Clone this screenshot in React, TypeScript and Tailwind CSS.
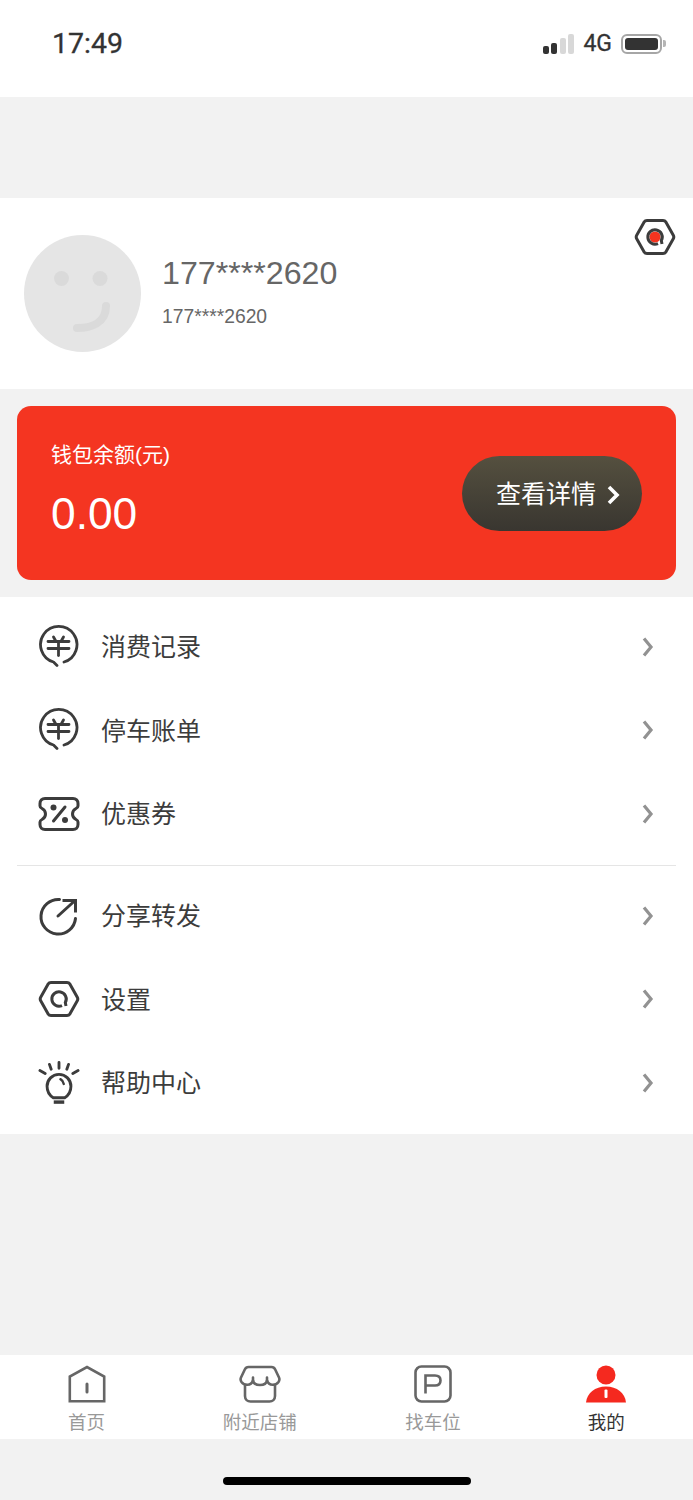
const cjk = "font-['Liberation_Sans','Noto_Sans_CJK_SC',sans-serif]";

function Chevron({ className = "" }: { className?: string }) {
  return (
    <svg width="14" height="24" viewBox="0 0 14 24" fill="none" className={className}>
      <path d="M4 3.5 L11 12 L4 20.5" stroke="currentColor" strokeWidth="3.2" />
    </svg>
  );
}

function MoneyIcon() {
  return (
    <svg width="42" height="46" viewBox="0 0 42 46" fill="none" stroke="#3c3c3c" strokeWidth="2.8" strokeLinecap="round">
      <path d="M26 38 A18.2 18.2 0 1 0 15.5 38 L19 41.5" strokeLinejoin="round" />
      <path d="M10 17.5 H31 M10 24.5 H31" />
      <path d="M20.5 17.5 V31.5" />
      <path d="M15.5 13 L17.5 16.5 M25.5 13 L23.5 16.5" />
    </svg>
  );
}

function CouponIcon() {
  return (
    <svg width="42" height="44" viewBox="0 0 42 44" fill="none">
      <path
        d="M7 6.5 H35 C38 6.5 40 8.5 40 11.5 V14 C40 15.5 39 16 38 16.5 C36 17.5 34.5 19.5 34.5 22 C34.5 24.5 36 26.5 38 27.5 C39 28 40 28.5 40 30 V32.5 C40 35.5 38 37.5 35 37.5 H7 C4 37.5 2 35.5 2 32.5 V30 C2 28.5 3 28 4 27.5 C6 26.5 7.5 24.5 7.5 22 C7.5 19.5 6 17.5 4 16.5 C3 16 2 15.5 2 14 V11.5 C2 8.5 4 6.5 7 6.5 Z"
        stroke="#3c3c3c"
        strokeWidth="3"
        strokeLinejoin="round"
      />
      <circle cx="15.5" cy="15.5" r="3" fill="#3c3c3c" />
      <circle cx="27" cy="28" r="3" fill="#3c3c3c" />
      <path d="M27 15 L15.5 29" stroke="#3c3c3c" strokeWidth="3" strokeLinecap="round" />
    </svg>
  );
}

function ShareIcon() {
  return (
    <svg width="42" height="44" viewBox="0 0 42 44" fill="none" stroke="#3c3c3c" strokeWidth="3" strokeLinecap="round">
      <path d="M21.5 5.5 A17.3 17.3 0 1 0 37.5 24.5" />
      <path d="M20 22 L36.5 7" />
      <path d="M24.5 6.5 H37.5 V18.5" strokeLinecap="butt" />
    </svg>
  );
}

function HexIcon({ size = 42, dot = false }: { size?: number; dot?: boolean }) {
  return (
    <svg width={size} height={size} viewBox="0 0 42 42" fill="none">
      <path
        d="M13 4.5 H29 C30.5 4.5 31.2 5 32 6.2 L39.3 19.3 C40 20.5 40 21.5 39.3 22.7 L32 35.8 C31.2 37 30.5 37.5 29 37.5 H13 C11.5 37.5 10.8 37 10 35.8 L2.7 22.7 C2 21.5 2 20.5 2.7 19.3 L10 6.2 C10.8 5 11.5 4.5 13 4.5 Z"
        stroke="#3c3c3c"
        strokeWidth="3"
      />
      {dot && <circle cx="21" cy="21" r="5.5" fill="#f5341f" />}
      <path d="M24 27.6 A7.2 7.2 0 1 1 27.3 24.6 L28 28" stroke="#3c3c3c" strokeWidth="3" />
    </svg>
  );
}

function BulbIcon() {
  return (
    <svg width="44" height="46" viewBox="0 0 44 46" fill="none" stroke="#3c3c3c" strokeWidth="3" strokeLinecap="round">
      <path d="M22 1.5 V7.5 M12 3.5 L13.8 8.5 M32 3.5 L30.2 8.5 M2 10 L7.5 13 M42 10 L36.5 13" />
      <path d="M16 38.5 C12 36 9.5 31.5 9.5 26.5 C9.5 19.5 15 14 22 14 C29 14 34.5 19.5 34.5 26.5 C34.5 31.5 32 36 28 38.5 Z" strokeLinejoin="round" />
      <path d="M23.5 19 C25.5 20 26.5 22 27 24" strokeWidth="2.5" />
      <path d="M16.5 43 H27.5" strokeWidth="3.6" strokeLinecap="butt" />
    </svg>
  );
}

function HomeIcon() {
  return (
    <svg width="38" height="38" viewBox="0 0 38 38" fill="none">
      <path d="M1.8 36.2 V11.5 L19 2 L36.2 11.5 V36.2 Z" stroke="#666" strokeWidth="2.6" strokeLinejoin="miter" />
      <path d="M19 19 V27" stroke="#666" strokeWidth="3" strokeLinecap="round" />
    </svg>
  );
}

function ShopIcon() {
  return (
    <svg width="42" height="38" viewBox="0 0 42 38" fill="none" stroke="#666" strokeWidth="2.6" strokeLinejoin="round" strokeLinecap="round">
      <path d="M9.5 2 H32.5 C34.5 2 35.5 3 36.2 4.5 L40 12.5 C40.8 14.2 40.5 15.5 39.5 17 C37 20.5 30 21.5 28 15.5 C27 21.5 15 21.5 14 15.5 C12 21.5 5 20.5 2.5 17 C1.5 15.5 1.2 14.2 2 12.5 L5.8 4.5 C6.5 3 7.5 2 9.5 2 Z" />
      <path d="M14 12.5 V16 M28 12.5 V16" />
      <path d="M6 20.5 V31 C6 34.5 8.5 36.5 11.5 36.5 H30.5 C33.5 36.5 36 34.5 36 31 V20.5" />
    </svg>
  );
}

function ParkIcon() {
  return (
    <svg width="38" height="38" viewBox="0 0 38 38" fill="none" stroke="#666" strokeWidth="2.6">
      <rect x="1.5" y="1.5" width="35" height="35" rx="6" />
      <path d="M11.5 28.5 V10.5 H21 C24.5 10.5 26.5 12.5 26.5 15.5 C26.5 18.5 24.5 20.5 21 20.5 H11.5" />
    </svg>
  );
}

function MeIcon() {
  return (
    <svg width="42" height="38" viewBox="0 0 42 38" fill="none">
      <circle cx="21" cy="10" r="9.5" fill="#f5291f" />
      <path d="M1 37.5 C2 28 10 21.5 21 21.5 C32 21.5 40 28 41 37.5 Z" fill="#f5291f" />
      <rect x="19.5" y="24.5" width="3" height="8.5" rx="1" fill="#fff" />
    </svg>
  );
}

function Row({ icon, label }: { icon: React.ReactNode; label: string }) {
  return (
    <div className="h-[83.6px] flex items-center pl-[38px] pr-[39px]">
      <div className="w-[42px] flex justify-center items-center">{icon}</div>
      <span className="ml-[21px] mt-[2px] text-[25px] text-[#3c3c3c] leading-none">{label}</span>
      <Chevron className="ml-auto text-[#929292]" />
    </div>
  );
}

function Tab({ icon, label, active = false }: { icon: React.ReactNode; label: string; active?: boolean }) {
  return (
    <div className="flex-1 flex flex-col items-center">
      <div className="h-[38px] mt-[10px] flex items-center justify-center">{icon}</div>
      <span className={`mt-[6px] text-[18.5px] leading-[28px] ${active ? "text-[#333]" : "text-[#999]"}`}>{label}</span>
    </div>
  );
}

export default function App() {
  return (
    <div className={`w-[693px] h-[1500px] bg-[#f2f2f2] flex flex-col overflow-hidden ${cjk}`}>
      <div className="h-[97px] bg-white flex items-start justify-between pl-[52px] pr-[27px] pt-[27px] shrink-0">
        <span className="mt-px font-['Roboto','Liberation_Sans',sans-serif] text-[28.5px] leading-[32px] text-[#333] [-webkit-text-stroke:0.3px_#333]">17:49</span>
        <div className="flex items-center gap-[9px] mt-[4px]">
          <div className="flex items-end gap-[2.5px] h-[20px]">
            <div className="w-[6px] h-[8px] rounded-[2px] bg-[#333]" />
            <div className="w-[6px] h-[11px] rounded-[2px] bg-[#333]" />
            <div className="w-[6px] h-[16px] rounded-[2px] bg-[#d8d8d8]" />
            <div className="w-[6px] h-[20px] rounded-[2px] bg-[#d8d8d8]" />
          </div>
          <span className="mt-px font-['Roboto','Liberation_Sans',sans-serif] text-[23px] leading-[24px] text-[#333] [-webkit-text-stroke:0.3px_#333]">4G</span>
          <div className="flex items-center">
            <div className="w-[41px] h-[20px] rounded-[6px] border-2 border-[#a6a6a6] p-[2px]">
              <div className="w-full h-full rounded-[3px] bg-[#333]" />
            </div>
            <div className="w-[3px] h-[7px] rounded-r-[2px] bg-[#b5b5b5] ml-[1px]" />
          </div>
        </div>
      </div>

      <div className="h-[101px] shrink-0" />

      <div className="relative h-[191px] bg-white flex items-center pl-[24px] shrink-0">
        <svg width="117" height="117" viewBox="0 0 117 117" className="shrink-0">
          <circle cx="58.5" cy="58.5" r="58.5" fill="#e5e5e5" />
          <circle cx="37.5" cy="43.5" r="7.5" fill="#dadada" />
          <circle cx="76" cy="43.5" r="7.5" fill="#dadada" />
          <path d="M53 93 C67 93 82 88 82 71" stroke="#dadada" strokeWidth="8" strokeLinecap="round" fill="none" />
        </svg>
        <div className="ml-[21px] flex flex-col text-[#666] mb-[5px]">
          <span className="text-[32.2px] leading-[40px]">177****2620</span>
          <span className="text-[19.3px] leading-[24px] mt-[12px]">177****2620</span>
        </div>
        <div className="absolute left-[634px] top-[18px]">
          <HexIcon size={42} dot />
        </div>
      </div>

      <div className="h-[17px] shrink-0" />

      <div className="mx-[17px] h-[174px] rounded-[14px] bg-[#f43521] flex items-center justify-between pl-[34px] pr-[34px] shrink-0">
        <div className="flex flex-col text-white pb-[6px]">
          <span className="text-[21px] leading-[28px]">钱包余额(元)</span>
          <span className="text-[44.3px] leading-[50px] mt-[20px]">0.00</span>
        </div>
        <div className="w-[180px] h-[75px] rounded-[37.5px] bg-gradient-to-b from-[#55503f] to-[#393630] flex items-center pl-[34px] text-white">
          <span className="text-[25px] leading-none mt-[2px]">查看详情</span>
          <svg width="13" height="20" viewBox="0 0 13 20" fill="none" className="ml-[11px] mt-[3px]">
            <path d="M2 2 L10 10 L2 18" stroke="currentColor" strokeWidth="3.6" />
          </svg>
        </div>
      </div>

      <div className="h-[17px] shrink-0" />

      <div className="bg-white h-[537px] shrink-0 flex flex-col pt-[8px]">
        <Row icon={<MoneyIcon />} label="消费记录" />
        <Row icon={<MoneyIcon />} label="停车账单" />
        <Row icon={<CouponIcon />} label="优惠券" />
        <div className="mx-[17px] mt-[9px] mb-[8px] h-px bg-[#e5e5e5] shrink-0" />
        <Row icon={<ShareIcon />} label="分享转发" />
        <Row icon={<HexIcon />} label="设置" />
        <Row icon={<BulbIcon />} label="帮助中心" />
      </div>

      <div className="h-[221px] shrink-0" />

      <div className="h-[84px] bg-white flex shrink-0">
        <Tab icon={<HomeIcon />} label="首页" />
        <Tab icon={<ShopIcon />} label="附近店铺" />
        <Tab icon={<ParkIcon />} label="找车位" />
        <Tab icon={<MeIcon />} label="我的" active />
      </div>

      <div className="flex-1 flex justify-center pt-[38px]">
        <div className="w-[248px] h-[8px] rounded-full bg-black" />
      </div>
    </div>
  );
}
